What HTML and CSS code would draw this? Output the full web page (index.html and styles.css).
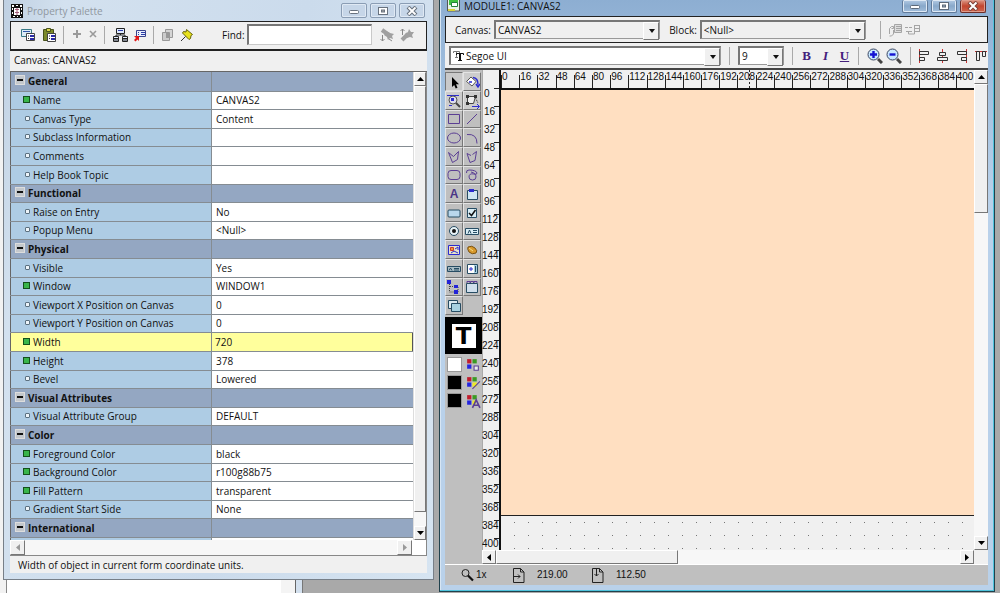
FILE: index.html
```html
<!DOCTYPE html>
<html lang="en">
<head>
<meta charset="utf-8">
<title>MODULE1: CANVAS2</title>
<link rel="stylesheet" href="styles.css">
</head>
<body>
<main class="desktop">
  <div class="back-window"></div>

  <section class="window palette">
    <header class="titlebar">
      <svg class="app-icon" width="12" height="14" viewBox="0 0 12 14"><path fill="#111" d="M0 0h12v14H0z"/><path fill="#fff" d="M1 1h2v2H1zM5 1h2v1H5zM9 1h2v2H9zM1 4h1v2H1zM3 4h6v7H3zM10 4h1v2h-1zM1 8h1v2H1zM10 8h1v2h-1zM2 12h2v1H2zM6 12h1v1H6zM9 12h1v1H9z"/><path stroke="#a05a78" d="M4 5.500h4M4 8.500h4M6 4v7"/></svg>
      <h1 class="title inactive">Property Palette</h1>
      <div class="win-buttons">
        <button class="win-btn" aria-label="Minimize"><svg width="12" height="10"><rect x="1.500" y="4.500" width="9" height="3" rx="1" fill="#fff" stroke="#68727e"/></svg></button>
        <button class="win-btn" aria-label="Maximize"><svg width="12" height="10"><rect x="1.500" y="1.500" width="9" height="7" fill="#fff" stroke="#68727e"/><rect x="4.500" y="4" width="3" height="2" fill="#aaa" stroke="#68727e"/></svg></button>
        <button class="win-btn" aria-label="Close"><svg width="12" height="10"><path d="M2 1l8 8M10 1L2 9" stroke="#68727e" stroke-width="4"/><path d="M2.500 1.500l7 7M9.500 1.500l-7 7" stroke="#fff" stroke-width="1.800"/></svg></button>
      </div>
    </header>

    <div class="palette-tools">
      <button class="tool" aria-label="Copy properties"><svg width="15" height="14" viewBox="0 0 15 14"><path fill="#dcecf5" stroke="#397985" d="M.5 1.500h10v7H.5z"/><path stroke="#2f55a6" d="M2 3.500h7"/><path fill="#fff" stroke="#444" d="M5.500 5.500h8v7h-8z"/><path stroke="#2929a5" stroke-width="2" d="M9 8h4M9 11h4"/><path stroke="#333" d="M7 8h1M7 10.500h1"/></svg></button>
      <button class="tool" aria-label="Paste properties"><svg width="15" height="14" viewBox="0 0 15 14"><path fill="#7b8a2a" stroke="#48521a" d="M1.500 1.500h10v11h-10z"/><path fill="#d8d44a" stroke="#48521a" d="M4.500.5h4v3h-4z"/><path fill="#fff" stroke="#444" d="M5.500 5.500h8v8h-8z"/><path stroke="#2929a5" stroke-width="2" d="M9 8h4M9 11h4"/><path stroke="#333" d="M7 8h1M7 10.500h1"/></svg></button>
      <span class="divider"></span>
      <button class="tool" aria-label="Add property"><svg width="10" height="14" viewBox="0 0 10 14"><path stroke="#9a9a9a" stroke-width="2" d="M1 6h8M5 2v8"/></svg></button>
      <button class="tool" aria-label="Delete property"><svg width="10" height="14" viewBox="0 0 10 14"><path stroke="#9a9a9a" stroke-width="1.600" d="M2 3l6 6M8 3L2 9"/></svg></button>
      <span class="divider"></span>
      <button class="tool" aria-label="Property class"><svg width="15" height="14" viewBox="0 0 15 14"><path fill="#dfeaff" stroke="#222" d="M3.500.5h8v5h-8zM.5 8.500h5v5h-5zM9.500 8.500h5v5h-5zM7.500 6v1M3 8V7h9v1"/><path stroke="#2b3da8" d="M5 2.500h5"/><path stroke="#222" d="M1 10.500h4M1 12h4M10 10.500h4M10 12h4"/></svg></button>
      <button class="tool" aria-label="Inherit"><svg width="13" height="14" viewBox="0 0 13 14"><path fill="#e9eefc" stroke="#39428a" d="M2.500 2.500h9v6h-9z"/><path stroke="#2b3da8" d="M7 4.500h4M7 6.500h4M4 4.500h1M4 6.500h1"/><path fill="#e01818" d="M0 8h5v5L3.500 11.500 1.500 13.500 0 12l2-2z"/></svg></button>
      <span class="divider"></span>
      <button class="tool" aria-label="Intersection"><svg width="12" height="14" viewBox="0 0 12 14"><path fill="#d5d5d5" stroke="#999" d="M3.500 1.500h7v8h-7z"/><path fill="#ccc" stroke="#999" d="M.5 4.500h7v8h-7z"/><path fill="#999" d="M4 5h4v5H4z"/></svg></button>
      <button class="tool" aria-label="Freeze"><svg width="14" height="14" viewBox="0 0 14 14"><path fill="#e8e21e" stroke="#66640a" d="M6.500 1.500l6 5-1.500 1-.5 3-1.500 1L2.500 5l1-1.500L6 4z"/><path stroke="#333" d="M5.500 8.500L1 13"/></svg></button>
      <label class="find-label" for="find">Find:</label>
      <input class="find" id="find" type="text">
      <button class="tool" aria-label="Find next"><svg width="14" height="14" viewBox="0 0 14 14"><path stroke="#a0a0a0" stroke-width="4" d="M2 2l7 5"/><path fill="#a0a0a0" d="M6 3l4 2 4 1-2 2 1 3-3-1-2 2-1-3-3-2z"/><path fill="none" stroke="#888" d="M2.500 7v6M.5 11l2 2 2-2M9 11l3 2"/></svg></button>
      <button class="tool" aria-label="Find previous"><svg width="14" height="14" viewBox="0 0 14 14"><path stroke="#a0a0a0" stroke-width="4" d="M2 12l6-6"/><path fill="#a0a0a0" d="M5 6l3-2 1-3 2 3 3 0-2 3 1 3-3-1-3 1z"/><path fill="none" stroke="#888" d="M2.500 1v6M.5 3l2-2 2 2"/></svg></button>
    </div>

    <h2 class="object-name">Canvas: CANVAS2</h2>

    <div class="sheet">
      <div class="sheet-view">
        <table class="props">
          <tr class="group"><th>General</th><td></td></tr>
          <tr class="set"><th>Name</th><td>CANVAS2</td></tr>
          <tr><th>Canvas Type</th><td>Content</td></tr>
          <tr><th>Subclass Information</th><td></td></tr>
          <tr><th>Comments</th><td></td></tr>
          <tr><th>Help Book Topic</th><td></td></tr>
          <tr class="group"><th>Functional</th><td></td></tr>
          <tr><th>Raise on Entry</th><td>No</td></tr>
          <tr><th>Popup Menu</th><td>&lt;Null&gt;</td></tr>
          <tr class="group"><th>Physical</th><td></td></tr>
          <tr><th>Visible</th><td>Yes</td></tr>
          <tr class="set"><th>Window</th><td>WINDOW1</td></tr>
          <tr><th>Viewport X Position on Canvas</th><td>0</td></tr>
          <tr><th>Viewport Y Position on Canvas</th><td>0</td></tr>
          <tr class="set current"><th>Width</th><td>720</td></tr>
          <tr class="set"><th>Height</th><td>378</td></tr>
          <tr><th>Bevel</th><td>Lowered</td></tr>
          <tr class="group"><th>Visual Attributes</th><td></td></tr>
          <tr><th>Visual Attribute Group</th><td>DEFAULT</td></tr>
          <tr class="group"><th>Color</th><td></td></tr>
          <tr class="set"><th>Foreground Color</th><td>black</td></tr>
          <tr class="set"><th>Background Color</th><td>r100g88b75</td></tr>
          <tr class="set"><th>Fill Pattern</th><td>transparent</td></tr>
          <tr><th>Gradient Start Side</th><td>None</td></tr>
          <tr class="group"><th>International</th><td></td></tr>
          <tr><th></th><td></td></tr>
        </table>
        <div class="scroll vertical">
          <button class="scroll-btn" aria-label="Scroll up"><svg width="7" height="4"><path d="M0 4h7L3.500 0z"/></svg></button>
          <div class="thumb"></div>
          <div class="track palette-track"></div>
          <button class="scroll-btn" aria-label="Scroll down"><svg width="7" height="4"><path d="M0 0h7L3.500 4z"/></svg></button>
        </div>
      </div>
      <div class="scroll horizontal palette-hscroll">
        <button class="scroll-btn" aria-label="Scroll left"><svg width="4" height="7"><path fill="#999" d="M4 0v7L0 3.500z"/></svg></button>
        <div class="track grow"></div>
        <button class="scroll-btn" aria-label="Scroll right"><svg width="4" height="7"><path fill="#999" d="M0 0v7l4-3.500z"/></svg></button>
        <div class="corner"></div>
      </div>
    </div>
    <footer class="hint">Width of object in current form coordinate units.</footer>
  </section>

  <section class="window editor">
    <header class="titlebar">
      <svg class="app-icon" width="14" height="12" viewBox="0 0 14 12"><path fill="#e8f4e8" stroke="#555" d="M.5-1h12v12H.5z"/><path fill="#3fc13f" d="M2 0h9v5H2z"/><path fill="#fff" stroke="#23823a" d="M4.500 2.500h6v4h-6z"/><path stroke="#d8d23a" stroke-width="2" d="M1 10h7"/></svg>
      <h1 class="title">MODULE1: CANVAS2</h1>
      <div class="win-buttons">
        <button class="win-btn" aria-label="Minimize"><svg width="12" height="10"><rect x="1.500" y="4.500" width="9" height="3" rx="1" fill="#fff" stroke="#5d6a7a"/></svg></button>
        <button class="win-btn" aria-label="Maximize"><svg width="12" height="10"><rect x="1.500" y="1.500" width="9" height="7" fill="#fff" stroke="#5d6a7a"/><rect x="4.500" y="4" width="3" height="2" fill="#9ab" stroke="#5d6a7a"/></svg></button>
        <button class="win-btn close" aria-label="Close"><svg width="12" height="10"><path d="M2 1l8 8M10 1L2 9" stroke="#7a4038" stroke-width="4"/><path d="M2.500 1.500l7 7M9.500 1.500l-7 7" stroke="#fff" stroke-width="2"/></svg></button>
      </div>
    </header>

    <div class="bar object-bar">
      <label for="canvas">Canvas:</label>
      <span class="combo canvas-combo"><select id="canvas"><option>CANVAS2</option></select></span>
      <label class="block-label" for="block">Block:</label>
      <span class="combo block-combo"><select id="block"><option>&lt;Null&gt;</option></select></span>
      <span class="divider object-divider"></span>
      <button class="tool" aria-label="Associate text"><svg width="15" height="14" viewBox="0 0 15 14"><path fill="none" stroke="#a5a5a5" d="M1.500 11V5.500l2-2h2v2h-2M5.500 7v4l-2 2h-2"/><path fill="#ddd" stroke="#a5a5a5" d="M6.500 1.500h7v8h-7z"/><path stroke="#a5a5a5" d="M8 3.500h5M8 5.500h5M8 7.500h5"/></svg></button>
      <button class="tool" aria-label="Associate prompt"><svg width="16" height="14" viewBox="0 0 16 14"><path fill="none" stroke="#a5a5a5" d="M0 4.500h3M4 4.500h3M9 2.500h5M9 5.500h6M9 8.500h5M9.500 2v7M14.500 2v7M1 8.500h6M3.500 9v2h6V9"/></svg></button>
    </div>

    <div class="bar format-bar">
      <span class="combo font-combo"><svg class="tt" width="11" height="12" viewBox="0 0 11 12"><path stroke="#777" fill="none" d="M.5 3V1.500h6V3M3.500 2v5M2 7.500h3"/><path stroke="#111" fill="none" d="M3.500 5V3.500h7V5M5 10.500h4"/><path stroke="#111" stroke-width="2" d="M7 4v7"/></svg><select aria-label="Font"><option>Segoe UI</option></select></span>
      <span class="divider"></span>
      <span class="combo size-combo"><select aria-label="Font size"><option>9</option></select></span>
      <span class="divider"></span>
      <button class="type-btn bold">B</button>
      <button class="type-btn italic">I</button>
      <button class="type-btn underline">U</button>
      <span class="divider"></span>
      <button class="tool zoomer" aria-label="Zoom in"><svg width="16" height="16" viewBox="0 0 16 16"><path stroke="#444" stroke-width="3" d="M11 11l4 4"/><circle cx="6.500" cy="6.500" r="5.500" fill="#c8e8ff" stroke="#3b4660"/><path stroke="#1414d2" stroke-width="2.400" d="M3 6.500h7M6.500 3v7"/></svg></button>
      <button class="tool zoomer" aria-label="Zoom out"><svg width="16" height="16" viewBox="0 0 16 16"><path stroke="#444" stroke-width="3" d="M11 11l4 4"/><circle cx="6.500" cy="6.500" r="5.500" fill="#c8e8ff" stroke="#3b4660"/><path stroke="#1414d2" stroke-width="2.400" d="M3.500 6.500h6"/></svg></button>
      <span class="divider"></span>
      <button class="tool align" aria-label="Align left"><svg width="12" height="14" viewBox="0 0 12 14"><path stroke="#c33" d="M1.500 0v14"/><path fill="none" stroke="#333" d="M1.500 2.500h9v3h-9zM1.500 8.500h5v3h-5z"/></svg></button>
      <button class="tool align" aria-label="Align center"><svg width="12" height="14" viewBox="0 0 12 14"><path stroke="#c33" d="M5.500 0v14"/><path fill="#f0f0f0" stroke="#333" d="M2.500 3.500h6v3h-6zM.5 8.500h10v3H.5z"/></svg></button>
      <button class="tool align" aria-label="Align right"><svg width="12" height="14" viewBox="0 0 12 14"><path stroke="#c33" d="M10.500 0v14"/><path fill="none" stroke="#333" d="M1.500 2.500h9v3h-9zM5.500 8.500h5v3h-5z"/></svg></button>
      <button class="tool align" aria-label="Align top"><svg width="12" height="14" viewBox="0 0 12 14"><path stroke="#c33" d="M0 2.500h12"/><path fill="none" stroke="#333" d="M1.500 2.500h3v9h-3zM7.500 2.500h3v5h-3z"/></svg></button>
    </div>

    <div class="workspace">
      <aside class="toolbox">
        <div class="tools">
          <button class="pressed" aria-label="Select"><svg viewBox="0 0 16 16"><path d="M6 3v10l2.200-2 1.500 3.500 1.800-.8L10 10.300h3z"/></svg></button>
          <button class="lit" aria-label="Rotate"><svg viewBox="0 0 16 16"><path fill="#fff" stroke="#555" d="M2.500 7.500L7 3l5 4.500L8 12z"/><path fill="none" stroke="#2b2bd0" stroke-width="1.500" d="M9 3.500q5 .5 5 7M12 10l2 3 2-3M5 8h3"/></svg></button>
          <button class="lit" aria-label="Magnify"><svg viewBox="0 0 16 16"><path stroke="#2b2bd0" d="M1 2.500h12M3 12.500h3"/><circle cx="7" cy="7" r="4" fill="#dde" stroke="#555"/><path fill="#2b2bd0" d="M5 5h3v3H5z"/><path stroke="#444" stroke-width="2" d="M10 10l4 4"/></svg></button>
          <button class="lit" aria-label="Reshape"><svg viewBox="0 0 16 16"><path fill="#eee" stroke="#444" d="M3.500 3.500h8l-2 7h-6z"/><path stroke="#444" stroke-dasharray="2 1" d="M11 4l3 6"/><path fill="#333" d="M2 2h3v3H2zM10 2h3v3h-3zM2 9h3v3H2z"/><path stroke="#2b2bd0" d="M8 13.500h7M13 11l2.500 2.500L13 16" fill="none"/></svg></button>
          <button aria-label="Rectangle"><svg viewBox="0 0 16 16"><path d="M2.500 3.500h11v9h-11z"/></svg></button>
          <button aria-label="Line"><svg viewBox="0 0 16 16"><path d="M3 13L13 3"/></svg></button>
          <button aria-label="Ellipse"><svg viewBox="0 0 16 16"><ellipse cx="8" cy="8" rx="6.500" ry="5"/></svg></button>
          <button aria-label="Arc"><svg viewBox="0 0 16 16"><path d="M3 4.500q10-1 10 9"/></svg></button>
          <button aria-label="Polygon"><svg viewBox="0 0 16 16"><path d="M2.500 3.500l5 4 5-5-1 8-5 3z"/></svg></button>
          <button aria-label="Polyline"><svg viewBox="0 0 16 16"><path d="M7 6.500l-4-2 3 9 5-2 1.500-9-4 3"/></svg></button>
          <button aria-label="Rounded rectangle"><svg viewBox="0 0 16 16"><rect x="2" y="3.500" width="12" height="9" rx="3"/></svg></button>
          <button aria-label="Freehand"><svg viewBox="0 0 16 16"><path d="M2.500 6Q2 3 5 3q7 0 8 3 0 2-3 1-5-1-5 3 0 3 3.500 3t3.500-3q0-4-5-5"/></svg></button>
          <button class="letter" aria-label="Text">A</button>
          <button class="widget" aria-label="Frame"><svg viewBox="0 0 16 16"><path fill="#cfe6f2" d="M3.500 4.500h10v9h-10z"/><path fill="#2b2bd0" stroke="none" d="M5 3h5v3H5z"/></svg></button>
          <button class="widget" aria-label="Button"><svg viewBox="0 0 16 16"><rect x="2" y="5" width="12" height="7" rx="1" fill="#b9d7ec"/></svg></button>
          <button class="widget" aria-label="Check box"><svg viewBox="0 0 16 16"><path fill="#d9edf5" d="M3.500 3.500h9v9h-9z"/><path stroke="#111" stroke-width="1.500" d="M5 8l2.500 2.500L11.500 5"/></svg></button>
          <button class="widget" aria-label="Radio button"><svg viewBox="0 0 16 16"><circle cx="8" cy="8" r="4.500" fill="#e8f3f7"/><circle cx="8" cy="8" r="2" fill="#111" stroke="none"/></svg></button>
          <button class="widget" aria-label="Text item"><svg viewBox="0 0 16 16"><path fill="#d9edf5" d="M1.500 5.500h13v6h-13z"/><path d="M4 10.500L5.500 7 7 10.500M9 7.500h4M9 9.500h4"/></svg></button>
          <button class="widget" aria-label="Image item"><svg viewBox="0 0 16 16"><path fill="#e8e3c8" stroke="#2b2bd0" d="M2.500 3.500h11v9h-11z"/><path fill="#e8a030" stroke="#c33" d="M4.500 5.500h3v3h-3z"/><path stroke="#2b2bd0" d="M5 11l3-2 4 2M9 7l3-2v3"/></svg></button>
          <button class="widget" aria-label="Chart item"><svg viewBox="0 0 16 16"><path fill="#d8992c" stroke="#7a5210" d="M4 5q4-2 7 1 3 3 1 5-4 2-7-1Q3 7 4 5z"/><path stroke="#f7dc80" d="M5 6l4 3"/></svg></button>
          <button class="widget" aria-label="Display item"><svg viewBox="0 0 16 16"><path fill="#a8bcc5" d="M1.500 5.500h13v5h-13z"/><path d="M3 9.500L4.500 7 6 9.500M8 7.500h5M8 9h5"/></svg></button>
          <button class="widget" aria-label="List item"><svg viewBox="0 0 16 16"><path fill="#fff" d="M3.500 3.500h10v9h-10z"/><path fill="#a6cfe4" stroke="none" d="M10 4h3v8h-3z"/><path stroke="#2b2bd0" d="M5 8h4M7 6v4"/><path d="M11.500 5v6"/></svg></button>
          <button class="widget" aria-label="Tree item"><svg viewBox="0 0 16 16"><path stroke="#444" stroke-dasharray="1 1" d="M3.500 3v10h8M4 7.500h8M12 8v5"/><path fill="#2424d8" stroke="none" d="M1 1h4v4H1zM8 6h4v3H8zM8 11h4v4H8z"/></svg></button>
          <button class="widget" aria-label="Tab canvas"><svg viewBox="0 0 16 16"><path fill="#d0dfec" d="M2.500 4.500h11v9h-11z"/><path stroke="#5b3f94" d="M3 4V2.500h3V4M6.500 4V2.500h3V4M10 4V2.500h3V4"/></svg></button>
          <button class="widget" aria-label="Stacked canvas"><svg viewBox="0 0 16 16"><path fill="#dceaf0" d="M2.500 2.500h9v8h-9z"/><path fill="#a8d1e0" d="M5.500 5.500h9v8h-9z"/></svg></button>
        </div>
        <div class="sample"><span>T</span></div>
        <div class="palette-picks">
          <button class="swatch white" aria-label="Fill sample"></button>
          <button class="pick" aria-label="Fill color"><svg viewBox="0 0 15 15"><path fill="#c11d2d" d="M2 2h4v4H2z"/><path fill="#3a9a22" d="M7 2h4v4H7z"/><path fill="#2424e0" d="M2 7h4v4H2z"/><path fill="#eee" stroke="#5b3f94" d="M8.500 8.500h4v4h-4z"/></svg></button>
          <button class="swatch" aria-label="Line sample"></button>
          <button class="pick" aria-label="Line color"><svg viewBox="0 0 15 15"><path fill="#c11d2d" d="M2 2h4v4H2z"/><path fill="#3a9a22" d="M7 2h4v4H7z"/><path fill="#2424e0" d="M2 7h4v4H2z"/><path fill="#eeea24" d="M7 7h4v4H7z"/><path stroke="#5b3f94" d="M7 13l7-7"/></svg></button>
          <button class="swatch" aria-label="Text sample"></button>
          <button class="pick" aria-label="Text color"><svg viewBox="0 0 15 15"><path fill="#c11d2d" d="M2 2h4v4H2z"/><path fill="#3a9a22" d="M7 2h4v4H7z"/><path fill="#2424e0" d="M2 7h4v4H2z"/><path fill="#eeea24" d="M7 7h3v4H7z"/><path fill="none" stroke="#5b3f94" stroke-width="1.500" d="M7 14l3.500-7.500L14 14M8.500 11.500h4"/></svg></button>
        </div>
      </aside>

      <div class="ruler-left">
        <span>0</span><span>16</span><span>32</span><span>48</span><span>64</span><span>80</span><span>96</span><span>112</span><span>128</span><span>144</span><span>160</span><span>176</span><span>192</span><span>208</span><span>224</span><span>240</span><span>256</span><span>272</span><span>288</span><span>304</span><span>320</span><span>336</span><span>352</span><span>368</span><span>384</span><span>400</span>
      </div>

      <div class="stage">
        <div class="ruler-top">
          <span>0</span><span>16</span><span>32</span><span>48</span><span>64</span><span>80</span><span>96</span><span>112</span><span>128</span><span>144</span><span>160</span><span>176</span><span>192</span><span class="marker">208</span><span>224</span><span>240</span><span>256</span><span>272</span><span>288</span><span>304</span><span>320</span><span>336</span><span>352</span><span>368</span><span>384</span><span>400</span>
        </div>
        <div class="canvas"></div>
        <div class="dots"></div>
      </div>

      <div class="scroll vertical editor-vscroll">
        <button class="scroll-btn" aria-label="Scroll up"><svg width="7" height="4"><path d="M0 4h7L3.500 0z"/></svg></button>
        <div class="thumb"></div>
        <div class="track"></div>
        <button class="scroll-btn" aria-label="Scroll down"><svg width="7" height="4"><path d="M0 0h7L3.500 4z"/></svg></button>
      </div>

      <div class="scroll horizontal editor-hscroll">
        <button class="scroll-btn" aria-label="Scroll left"><svg width="4" height="7"><path d="M4 0v7L0 3.500z"/></svg></button>
        <div class="thumb"></div>
        <div class="track"></div>
        <button class="scroll-btn" aria-label="Scroll right"><svg width="4" height="7"><path d="M0 0v7l4-3.500z"/></svg></button>
      </div>
    </div>

    <footer class="status">
      <svg width="13" height="14" viewBox="0 0 13 14"><circle cx="4.500" cy="5" r="3.500" fill="none" stroke="#222"/><path stroke="#111" stroke-width="2.200" d="M7 7.500l5 5"/></svg>
      <span class="zoom-level">1x</span>
      <svg width="12" height="15" viewBox="0 0 12 15"><path fill="none" stroke="#222" d="M.5.5h7l3.500 3.500v10.500H.5zM7.500.5V4H11M0 8.500h7M5 6.500l2 2-2 2"/></svg>
      <span class="coord">219.00</span>
      <svg width="12" height="15" viewBox="0 0 12 15"><path fill="none" stroke="#222" d="M.5.500h7l3.500 3.500v10.500H.5zM7.500.5V4H11M4.500 0v8M2.500 6l2 2 2-2"/></svg>
      <span class="coord">112.50</span>
    </footer>
  </section>
</main>
</body>
</html>
```
FILE: styles.css
```css
* { box-sizing: border-box; }

body {
  margin: 0;
  font-family: "Open Sans", "Noto Sans", sans-serif;
  font-size: 10px;
  line-height: 14px;
  color: #111;
}

button, input, select {
  font: inherit;
  color: inherit;
  margin: 0;
  padding: 0;
  border: 0;
  border-radius: 0;
  background: none;
}

h1, h2 { margin: 0; font-size: 10px; font-weight: 400; }
svg { display: block; }

.desktop {
  position: relative;
  display: grid;
  grid-template-columns: 431fr 556fr;
  gap: 5px;
  height: 100vh;
  min-height: 560px;
  padding: 0 5px 1px 3px;
  background: #a9a9a9;
  overflow: hidden;
}

.back-window {
  position: absolute;
  left: 0;
  top: 0;
  bottom: 0;
  width: 302px;
  background: #fff;
  border: solid #d3e0ee;
  border-width: 0 6px 0 0;
  outline: 1px solid #777;
  box-shadow: inset 6px 0 #f2f2f2, inset 7px 0 #888, inset -1px 0 #666, inset -15px 0 #f4f4f4;
}

.window {
  position: relative;
  display: flex;
  flex-direction: column;
  min-width: 0;
  min-height: 0;
}

.palette {
  margin-bottom: 12px;
  padding: 0 6px 6px;
  border: 1px solid #777f88;
  border-top: 0;
  background: linear-gradient(100deg, #bfd0e2, #d3e1ef 60px, #cbdbec 300px, #d6e4f1);
}

.editor {
  padding: 0 6px 6px 5px;
  border: 1px solid #20414c;
  border-top: 0;
  background: linear-gradient(#8daed2, #a3c1e0 90px, #b9d1ea 200px);
  box-shadow: inset -1px -1px #4ec3dc, inset 1px 0 #d7e6f4;
}

.titlebar { display: flex; flex: none; padding-left: 1px; }
.palette .titlebar { height: 21px; padding-top: 4px; }
.editor .titlebar { height: 16px; }
.title { flex: 1; padding-left: 4px; }
.inactive { color: #8f979f; }
.editor .app-icon { margin-left: 1px; }
.editor .title { line-height: 12px; padding-left: 3px; }

.win-buttons { display: flex; gap: 3px; padding-right: 2px; }
.win-btn {
  display: grid;
  place-items: center;
  width: 26px;
  height: 15px;
  border: 1px solid #8a9db4;
  border-radius: 2px;
  background: #c6d6e8;
  box-shadow: inset 0 0 0 1px #dfe9f4;
}
.palette .win-buttons { margin-top: -1px; }
.editor .win-btn {
  height: 13px;
  border-color: #617a99;
  border-top: 0;
  background: linear-gradient(#b4cbe4, #88a8ca 50%, #a3bfdc);
}
.editor .close {
  border-color: #6e2d28;
  background: linear-gradient(#dc9a88, #c2462f 50%, #d0674f);
  box-shadow: inset 0 0 0 1px #df9c8c;
}

.tool, .type-btn { flex: none; }
.divider { flex: none; width: 1px; height: 18px; background: #a9a9a9; }

.palette-tools {
  display: flex;
  flex: none;
  align-items: center;
  gap: 6px;
  height: 30px;
  padding: 0 12px 2px 10px;
  border: 1px solid #222;
  border-bottom-width: 2px;
  background: #f0f0f0;
}
.palette-tools .divider { margin: 0 2px 0 0; }
.find-label { margin-left: 22px; }
.find {
  flex: 1;
  min-width: 0;
  height: 21px;
  margin: 0 2px 0 -4px;
  border: 1px solid #c9c9c9;
  border-top: 2px solid #777;
  border-left: 2px solid #777;
  background: #fff;
}

.object-name { flex: none; height: 20px; padding: 2px 4px; background: #f0f0f0; }

.sheet {
  display: flex;
  flex: 1;
  flex-direction: column;
  min-height: 0;
  border-top: 1px solid #666;
  border-bottom: 1px solid #888;
  background: #fff;
}
.sheet-view { display: flex; flex: 1; min-height: 0; overflow: hidden; }

.props { flex: 1; align-self: flex-start; table-layout: fixed; border-collapse: collapse; }
.props tr { height: 19px; }
.props tr:nth-child(5n + 2), .props tr:nth-child(5n + 4) { height: 18px; }
.props th, .props td {
  width: 50%;
  padding: 0 0 0 4px;
  border: 1px solid #858c92;
  border-width: 0 0 1px 1px;
  line-height: 14px;
  font-weight: 400;
  text-align: left;
  white-space: nowrap;
}
.props th { border-left-color: #666; background: #aecce4; }
.props th::before {
  content: "";
  display: inline-block;
  width: 3px;
  height: 3px;
  margin: 0 3px 2px 10px;
  border: 1px solid #5d7180;
  border-radius: 1px;
  background: #eef5fa;
}
.props .set th::before {
  width: 5px;
  height: 5px;
  margin: 0 3px 1px 8px;
  border-color: #14501c;
  border-radius: 0;
  background: #39b54a;
}
.props .group th { padding-left: 3px; font-weight: 700; }
.props .group th, .props .group td { background: #94a7c2; }
.props .group th::before {
  width: 8px;
  height: 8px;
  margin: 0 3px 0 1px;
  border: 1px solid #ddd;
  border-radius: 0;
  background: linear-gradient(#111, #111) center / 6px 2px no-repeat #c4c8cc;
}
.props .current th, .props .current td {
  border-top: 1px solid #555;
  background: #ffff9c;
}
.props .current td { padding-left: 3px; border-right: 1px solid #555; }

.scroll { display: flex; flex: none; background: #f7f7f7; }
.vertical { flex-direction: column; width: 14px; }
.horizontal { height: 14px; }
.scroll-btn {
  display: grid;
  flex: none;
  place-items: center;
  width: 14px;
  height: 14px;
}
.scroll-btn, .thumb {
  border: 1px solid #fff;
  border-right-color: #777;
  border-bottom-color: #777;
  background: #f0f0f0;
}
.palette .vertical { border-left: 1px solid #ddd; border-right: 1px solid #888; }
.palette .vertical .scroll-btn { width: 12px; }
.palette .thumb { flex: 1; }
.palette-track { height: 14px; }
.palette-hscroll { height: 15px; }
.palette-hscroll .scroll-btn { width: 15px; height: 15px; }
.grow { flex: 1; }
.corner { width: 15px; border-right: 1px solid #888; background: #fff; }

.hint { flex: none; height: 17px; padding: 2px 8px; background: #f0f0f0; }

.bar { display: flex; flex: none; align-items: center; height: 27px; background: #f0f0f0; }
.object-bar { border: 1px solid #222; padding: 0 66px 0 9px; }
.object-bar label { margin-right: 3px; }
.object-bar .block-label { margin-left: 9px; }
.object-bar .tool { margin-left: 2px; }
.object-divider { margin: 0 5px 0 14px; }

.combo {
  position: relative;
  display: flex;
  flex: 1;
  align-items: center;
  min-width: 0;
  height: 19px;
  border: 2px solid #777;
  border-right: 1px solid #999;
  border-bottom: 1px solid #999;
}
.combo select { flex: 1; min-width: 0; height: 16px; padding-left: 2px; appearance: none; outline: 0; }
.combo::after {
  content: "";
  position: absolute;
  top: 0;
  right: 0;
  width: 14px;
  height: 100%;
  border: 1px solid #fff;
  border-right-color: #777;
  border-bottom-color: #777;
  background: #f0f0f0;
  pointer-events: none;
}
.combo::before {
  content: "";
  position: absolute;
  z-index: 1;
  top: 7px;
  right: 4px;
  border: 3px solid transparent;
  border-top: 4px solid #111;
  border-bottom: 0;
  pointer-events: none;
}

.format-bar { gap: 8px; padding: 0 1px 0 4px; border-bottom: 2px solid #444; }
.font-combo, .size-combo { background: #fff; }
.font-combo { padding-left: 2px; }
.size-combo { flex: none; width: 46px; }
.type-btn {
  width: 11px;
  font: 700 13px/16px "Liberation Serif", serif;
  color: #43207c;
}
.italic { font-style: italic; }
.underline { text-decoration: underline; }
.zoomer + .zoomer { margin-left: -5px; }
.format-bar .align { width: 12px; margin-left: -1px; }

.workspace {
  display: grid;
  flex: 1;
  grid-template: 1fr 14px / 37px 19px 1fr 14px;
  min-height: 0;
  background: #f0f0f0;
}

.toolbox { grid-row: 1 / 3; padding-top: 2px; background: #bfbfbf; overflow: hidden; }
.tools {
  display: grid;
  grid-template-columns: 18px 18px;
  grid-template-rows: repeat(4, 19px 19px 18px) 19px;
}
.tools button {
  display: grid;
  place-items: center;
  border: 1px solid #e4e4e4;
  border-right-color: #777;
  border-bottom-color: #777;
}
.tools svg { width: 16px; height: 16px; fill: none; stroke: #5b3f94; }
.tools .widget svg { stroke: #274c63; }
.tools .pressed { border-color: #777 #ddd #ddd #777; background: #c9c9c9; }
.tools .pressed svg { fill: #000; stroke: none; }
.tools .lit { background: #ccc; }
.tools .lit svg { stroke: none; }
.tools .letter { font: 700 12px/16px "Liberation Sans", sans-serif; color: #4a3586; }

.sample { display: grid; place-items: center; height: 37px; margin-top: 2px; background: #000; }
.sample span {
  width: 24px;
  height: 24px;
  background: #fff;
  color: #000;
  font: 700 23px/24px "DejaVu Sans", sans-serif;
  text-align: center;
}

.palette-picks {
  display: grid;
  grid-template-columns: 16px 16px;
  grid-auto-rows: 15px;
  gap: 3px 2px;
  padding: 3px 0 0 2px;
}
.swatch { width: 15px; background: #000; border: 1px solid #999; }
.white { background: #fff; }
.pick svg { width: 16px; height: 16px; }

.ruler-left, .ruler-top, .status { font-family: "Liberation Sans", sans-serif; font-size: 10px; }
.ruler-left {
  display: flex;
  flex-direction: column;
  padding-top: 18px;
  border-right: 2px solid #111;
  box-shadow: inset 1px 0 #aaa;
  overflow: hidden;
}
.ruler-left span {
  flex: none;
  height: 18px;
  line-height: 12px;
  background: linear-gradient(#222, #222) right top / 5px 1px no-repeat;
}
.ruler-left span:nth-child(-n + 7) { padding-left: 2px; }
.ruler-left span:last-child { height: 12px; }

.stage { display: flex; flex-direction: column; min-width: 0; }
.ruler-top { display: flex; flex: none; height: 20px; border-bottom: 2px solid #111; overflow: hidden; }
.ruler-top span {
  flex: 1;
  min-width: 0;
  padding-left: 1px;
  line-height: 14px;
  background: linear-gradient(#222, #222) left bottom / 1px 13px no-repeat;
}
.ruler-top .marker {
  background: linear-gradient(#222, #222) left bottom / 1px 13px no-repeat,
    repeating-linear-gradient(#222 0 2px, transparent 2px 4px) 12px 0 / 1px 18px no-repeat;
}
.canvas { flex: 1; border-bottom: 1px solid #222; background: #ffdfc1; }
.dots {
  flex: none;
  height: 34px;
  background: conic-gradient(from 270deg at 1px 1px, #777 90deg, transparent 0) 13px 6px / 14px 13px;
}

.editor-vscroll .thumb { flex: 128; }
.editor-vscroll .track { flex: 325; }
.editor-hscroll { grid-column: 2 / 4; }
.editor-hscroll .thumb { flex: 181; }
.editor-hscroll .track { flex: 284; }

.status {
  display: flex;
  flex: none;
  align-items: center;
  height: 21px;
  padding-left: 16px;
  border-top: 1px solid #fff;
  background: #bfbfbf;
}
.zoom-level { width: 39px; padding-left: 2px; }
.coord { width: 67px; padding-left: 12px; }
```
